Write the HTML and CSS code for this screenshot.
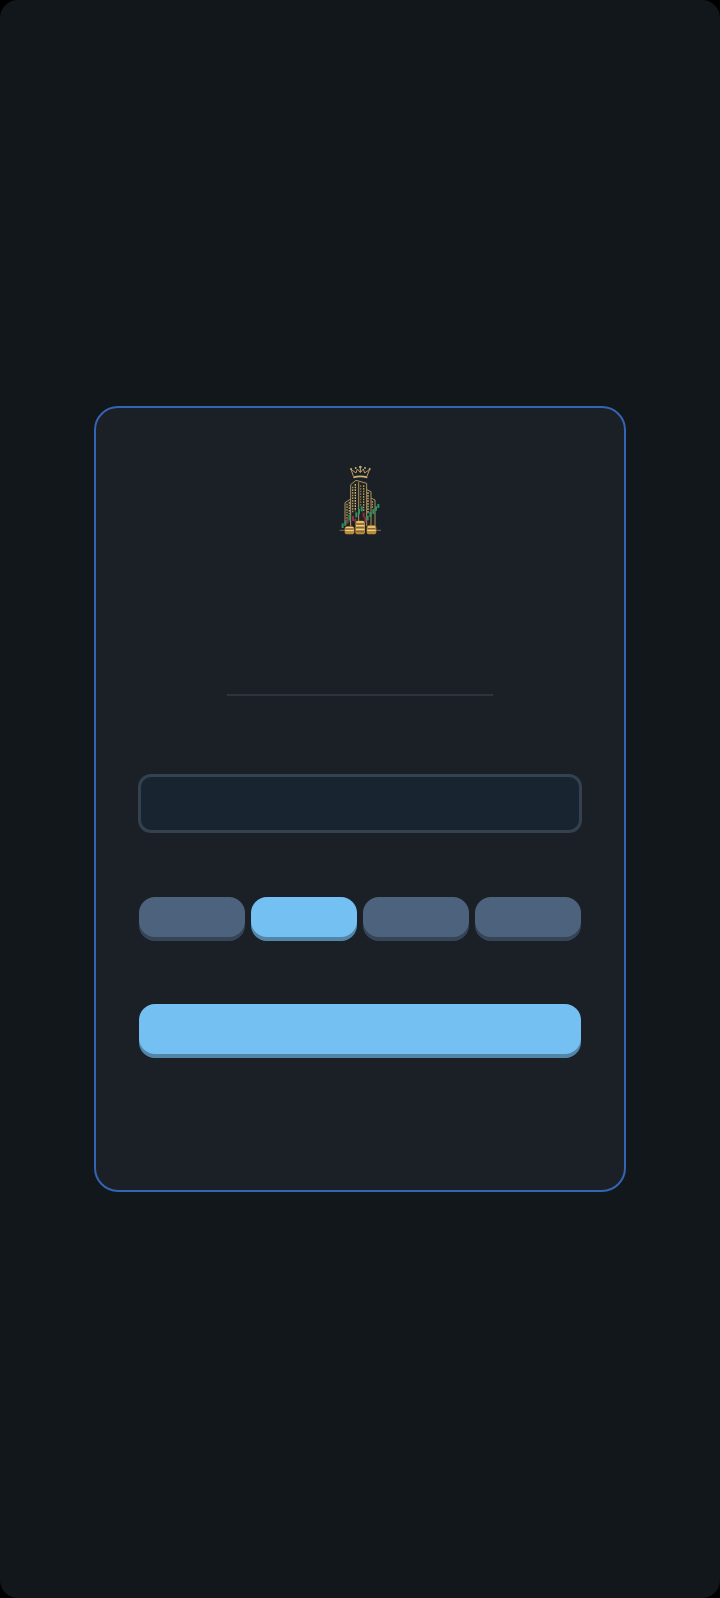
FILE: index.html
```html
<!DOCTYPE html>
<html lang="en">
  <head>
    <meta charset="UTF-8" />
    <meta name="viewport" content="width=device-width, initial-scale=1.0" />
    <title>Welcome</title>
    <link rel="stylesheet" href="styles.css">
  </head>
  <body>
    <main class="screen">
      <form class="card">
        <svg class="logo" viewBox="0 0 180 252" aria-hidden="true">
          <!-- crown -->
          <g fill="none" stroke="#b89a5c" stroke-width="3">
            <path d="M70 54 L63 34 L78 45 L82 33 L91 44 L100 33 L104 45 L119 34 L111 54"/>
            <path d="M70 58 Q91 52 112 58" stroke="#cdb474" stroke-width="5"/>
            <path d="M91 24 V42" stroke="#c8b078"/>
          </g>
          <g fill="#c4ad74">
            <circle cx="63" cy="33" r="3"/>
            <circle cx="77" cy="30" r="3"/>
            <circle cx="91" cy="27" r="4"/>
            <circle cx="105" cy="30" r="3"/>
            <circle cx="119" cy="33" r="3"/>
          </g>
          <!-- towers -->
          <g fill="#20231f" stroke="#a99161" stroke-width="3">
            <path d="M45 204 V134 L62 123 V204"/>
            <path d="M119 204 V118 L135 126 V204"/>
            <path d="M106 204 V93 L123 101 V204"/>
            <path d="M62 204 V80 L78 67 L110 76 V204"/>
            <path d="M86 204 V73"/>
          </g>
          <g fill="none" stroke="#aa9568" stroke-width="4" stroke-dasharray="5 3">
            <path d="M51 137 V194"/>
            <path d="M58 132 V190"/>
            <path d="M68 86 V165"/>
            <path d="M76 78 V160" stroke="#d0b478"/>
            <path d="M92 82 V145" stroke="#756a50"/>
            <path d="M101 82 V160"/>
            <path d="M114 103 V168" stroke="#d0b478"/>
            <path d="M127 129 V150"/>
          </g>
          <!-- candles -->
          <g fill="none" stroke-width="6">
            <g stroke="#2a9464">
              <path d="M38 196 V210"/>
              <path d="M47 187 V200"/>
              <path d="M59 171 V187"/>
              <path d="M79 163 V178"/>
              <path d="M87 153 V169"/>
              <path d="M95 145 V160"/>
              <path d="M113 173 V187"/>
              <path d="M121 162 V177"/>
              <path d="M130 153 V168"/>
              <path d="M138 145 V158"/>
              <path d="M145 138 V150"/>
            </g>
            <g stroke="#87334b">
              <path d="M53 183 V196"/>
              <path d="M69 174 V189"/>
              <path d="M76 182 V192"/>
              <path d="M101 164 V178"/>
              <path d="M106 177 V193"/>
            </g>
          </g>
          <!-- coins -->
          <path d="M29 217 H48 M136 217 H153" stroke="#816849" stroke-width="3"/>
          <g fill="#b88b3f">
            <rect x="44" y="205" width="29" height="24" rx="8"/>
            <rect x="76" y="188" width="29" height="41" rx="8"/>
            <rect x="110" y="202" width="29" height="27" rx="8"/>
          </g>
          <g stroke="#f0ce7b" stroke-width="4">
            <path d="M48 209 H69 M46 217 H71 M80 192 H101 M78 203 H103 M78 214 H103 M114 207 H135 M112 217 H137"/>
          </g>
          <path d="M47 213 H70 M79 198 H102 M79 209 H102 M79 221 H102 M113 212 H136" stroke="#5b472b" stroke-width="2"/>
        </svg>

        <hr class="divider">

        <input class="field" type="text" aria-label="Name">

        <div class="options">
          <button type="button" class="option" aria-label="Option 1"></button>
          <button type="button" class="option active" aria-label="Option 2"></button>
          <button type="button" class="option" aria-label="Option 3"></button>
          <button type="button" class="option" aria-label="Option 4"></button>
        </div>

        <button type="submit" class="submit" aria-label="Continue"></button>
      </form>
    </main>
  </body>
</html>
```
FILE: styles.css
```css
* {
  box-sizing: border-box;
}
html {
  background-color: #000;
}
body {
  margin: 0;
  font-family: "Liberation Sans", Arial, sans-serif;
}
.screen {
  display: flex;
  align-items: center;
  min-height: 100vh;
  padding: 24px 94px;
  background-color: #12171b;
  border-radius: 18px;
}
.card {
  display: flex;
  flex-direction: column;
  width: 100%;
  padding: 50px 43px 132px;
  background-color: #1b2026;
  border: 2px solid #3564b4;
  border-radius: 24px;
}
.logo {
  align-self: center;
  width: 60px;
  height: 84px;
}
.divider {
  width: 60%;
  height: 2px;
  margin: 152px auto 79px;
  border: none;
  background-color: #2e333c;
}
.field {
  width: 100%;
  height: 57px;
  padding: 0 16px;
  color: #fff;
  font-size: 16px;
  background-color: #182430;
  border: 2px solid #34424f;
  border-radius: 12px;
  box-shadow: 0 0 0 1px #34424f;
}
.options {
  display: grid;
  grid-template-columns: repeat(4, 1fr);
  gap: 6px;
  margin: 65px 0 63px;
}
button {
  padding: 0;
  border: none;
  border-radius: 16px;
  box-shadow: inset 0 -4px 0 rgba(0, 0, 0, 0.3);
  cursor: pointer;
}
.option {
  height: 44px;
  background-color: #4d637d;
}
.option.active,
.submit {
  background-color: #75c0f2;
}
.submit {
  width: 100%;
  height: 54px;
}
```
